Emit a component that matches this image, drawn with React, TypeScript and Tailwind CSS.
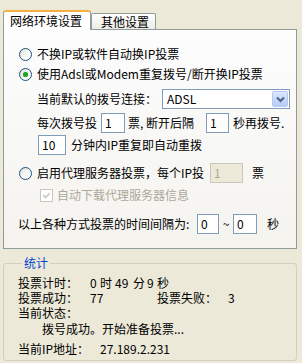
import React from "react";

const font = { fontFamily: '"Noto Sans CJK SC", "Noto Sans", sans-serif' };

function Radio({ checked }: { checked?: boolean }) {
  return (
    <span className="relative inline-block w-[13px] h-[13px] shrink-0 rounded-full border border-[#1C5180] bg-linear-to-br from-[#DCDCD7] via-[#F8F8F4] to-white">
      {checked && (
        <span className="absolute left-[3px] top-[3px] w-[5px] h-[5px] rounded-full bg-[#21A121] shadow-[0_0_1px_#5fd35f]" />
      )}
    </span>
  );
}

function Box({ w, value, disabled, ml }: { w: string; value: string; disabled?: boolean; ml?: string }) {
  return (
    <span
      className={`inline-flex items-center h-[20px] shrink-0 pl-[3px] border ${w} ${ml ?? ""} ${
        disabled ? "border-[#C9C7BA] bg-[#ECE9D8] text-[#ACA899]" : "border-[#7F9DB9] bg-white text-black"
      }`}
    >
      {value}
    </span>
  );
}

export default function App() {
  return (
    <div style={font} className="w-[302px] h-[363px] bg-[#ECE9D8] text-[12px] leading-[14px] text-black overflow-hidden">
      {/* tabs */}
      <div className="flex items-end pt-[10px] pl-[3px]">
        <div className="relative z-10 -mb-px h-[20px] w-[88px] rounded-t-[3px] border-x border-t-2 border-x-[#919B9C] border-t-[#F4B13F] bg-white pl-[6px] pt-[2px]">
          网络环境设置
        </div>
        <div className="h-[16px] w-[65px] rounded-t-[2px] border-x border-t border-[#919B9C] bg-linear-to-b from-white to-[#ECEBE6] pl-[9px] pt-[1px]">
          其他设置
        </div>
      </div>

      {/* panel */}
      <div className="ml-[3px] w-[294px] h-[220px] border border-[#919B9C] bg-linear-to-b from-[#FDFDFE] to-[#F4F3EE] pt-[14px]">
        <div className="flex items-center h-[20px] ml-[15px]">
          <Radio />
          <span className="ml-[5px]">不换IP或软件自动换IP投票</span>
        </div>
        <div className="flex items-center h-[20px] ml-[15px]">
          <Radio checked />
          <span className="ml-[5px]">使用Adsl或Modem重复拨号/断开换IP投票</span>
        </div>
        <div className="flex items-center h-[20px] mt-[5px] ml-[33px]">
          <span className="w-[125px]">当前默认的拨号连接：</span>
          <span className="flex items-center h-[20px] w-[128px] border border-[#7F9DB9] bg-white pl-[4px] pr-[1px]">
            <span className="flex-1">ADSL</span>
            <span className="flex items-center justify-center w-[16px] h-[16px] rounded-[2px] border border-[#B4C8F4] bg-linear-to-b from-[#DCE7FD] to-[#B6CBF7]">
              <svg width="9" height="7" viewBox="0 0 9 7">
                <path d="M1 1.5 L4.5 5 L8 1.5" fill="none" stroke="#4D6185" strokeWidth="2" />
              </svg>
            </span>
          </span>
        </div>
        <div className="flex items-center h-[20px] mt-[4px] ml-[33px]">
          <span className="w-[64px]">每次拨号投</span>
          <Box w="w-[24px]" value="1" />
          <span className="w-[81px] pl-[3px]">票, 断开后隔</span>
          <Box w="w-[23px]" value="1" />
          <span className="ml-[4px]">秒再拨号.</span>
        </div>
        <div className="flex items-center h-[20px] mt-[2px] ml-[34px]">
          <Box w="w-[28px]" value="10" />
          <span className="ml-[5px]">分钟内IP重复即自动重拨</span>
        </div>
        <div className="flex items-center h-[20px] mt-[8px] ml-[15px]">
          <Radio />
          <span className="ml-[5px] w-[173px]">启用代理服务器投票，每个IP投</span>
          <Box w="w-[33px]" value="1" disabled />
          <span className="ml-[9px]">票</span>
        </div>
        <div className="flex items-center h-[14px] mt-[5px] ml-[36px]">
          <span className="flex items-center justify-center w-[13px] h-[13px] border border-[#CAC8BB] bg-white">
            <svg width="9" height="9" viewBox="0 0 9 9">
              <path d="M1 4 L3.5 6.5 L8 2" fill="none" stroke="#CAC8BB" strokeWidth="1.6" />
            </svg>
          </span>
          <span className="ml-[4px] text-[#ACA899]">自动下载代理服务器信息</span>
        </div>
        <div className="flex items-center h-[20px] mt-[12px] ml-[14px]">
          <span className="w-[179px]">以上各种方式投票的时间间隔为:</span>
          <Box w="w-[22px]" value="0" />
          <span className="w-[14px] text-center">~</span>
          <Box w="w-[24px]" value="0" />
          <span className="ml-[10px]">秒</span>
        </div>
      </div>

      {/* stats */}
      <fieldset className="ml-[3px] mt-[7px] w-[294px] rounded-[3px] border border-[#D0D0BF] pl-[14px] pt-[5px] pb-[4px]">
        <legend className="ml-[4px] px-[2px] text-[#0046D5]">统计</legend>
        <div className="flex items-center h-[15px]">
          <span className="w-[72px]">投票计时：</span>
          <span className="w-[10px]">0</span>
          <span className="w-[15px]">时</span>
          <span className="w-[18px]">49</span>
          <span className="w-[14px]">分</span>
          <span className="w-[10px]">9</span>
          <span>秒</span>
        </div>
        <div className="flex items-center h-[15px]">
          <span className="w-[72px]">投票成功：</span>
          <span className="w-[67px]">77</span>
          <span className="w-[71px]">投票失败：</span>
          <span>3</span>
        </div>
        <div className="flex items-center h-[15px]">
          <span>当前状态：</span>
        </div>
        <div className="flex items-center h-[15px] mt-[1px] ml-[24px]">
          <span>拨号成功。开始准备投票...</span>
        </div>
        <div className="flex items-center h-[15px] mt-[5px]">
          <span className="w-[82px]">当前IP地址：</span>
          <span>27.189.2.231</span>
        </div>
      </fieldset>
    </div>
  );
}
